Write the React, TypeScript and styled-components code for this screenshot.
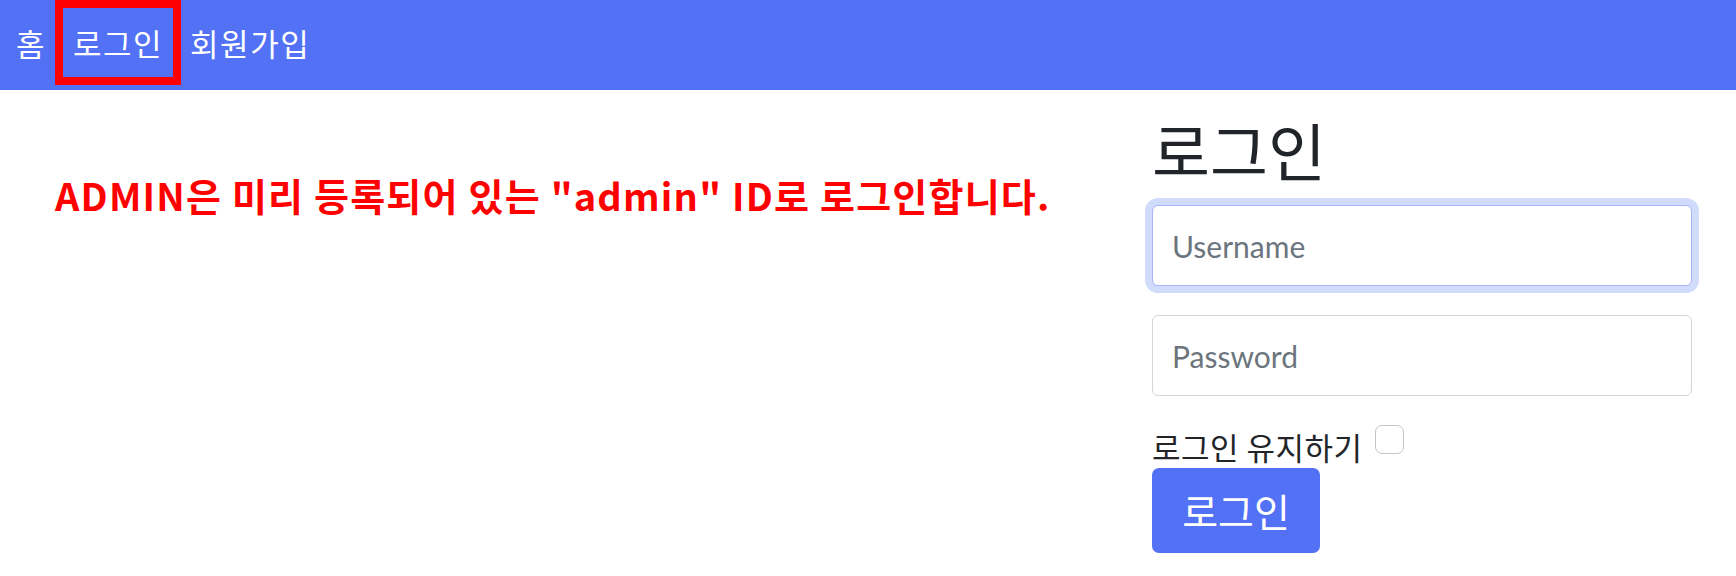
import React from "react";
import styled, { createGlobalStyle } from "styled-components";

const GlobalStyle = createGlobalStyle`
  html, body {
    margin: 0;
    padding: 0;
    background: #ffffff;
  }
  body {
    font-family: "Noto Sans CJK KR", "Noto Sans", sans-serif;
    color: #212529;
  }
  * { box-sizing: border-box; }
`;

const Navbar = styled.nav`
  display: flex;
  align-items: flex-start;
  height: 90px;
  padding-left: 7px;
  background: #5271f5;
`;

const NavLink = styled.a<{ $active?: boolean }>`
  display: flex;
  align-items: center;
  height: 85px;
  padding: 0 ${(p) => (p.$active ? "10px" : "9px")};
  border: ${(p) => (p.$active ? "8px solid #ff0000" : "none")};
  font-size: 31px;
  letter-spacing: 1.5px;
  line-height: 1;
  color: #ffffff;
  text-decoration: none;
  cursor: pointer;
`;

const Main = styled.main`
  display: flex;
  justify-content: space-between;
  padding: 0 44px 0 55px;
`;

const Notice = styled.p`
  margin: 82px 0 0;
  font-size: 38px;
  font-weight: 700;
  letter-spacing: 1.2px;
  line-height: 46px;
  color: #ff0000;
`;

const LoginPanel = styled.section`
  display: flex;
  flex-direction: column;
  width: 540px;
  padding-top: 24px;
`;

const Title = styled.h2`
  margin: 0;
  font-size: 63px;
  font-weight: 400;
  line-height: 70px;
  color: #212529;
`;

const Field = styled.input<{ $focused?: boolean }>`
  display: block;
  width: 100%;
  height: 81px;
  margin-top: ${(p) => (p.$focused ? "21px" : "29px")};
  padding: 0 19px;
  border: 1px solid ${(p) => (p.$focused ? "#a4b6f7" : "#d6d6d6")};
  border-radius: 6px;
  box-shadow: ${(p) => (p.$focused ? "0 0 0 7px #d1dbfb" : "none")};
  font-family: Lato, "Noto Sans", sans-serif;
  font-size: 30px;
  color: #212529;
  outline: none;
  background: #fff;

  &::placeholder {
    color: #6c757d;
  }
`;

const RememberRow = styled.div`
  display: flex;
  align-items: flex-start;
  gap: 12px;
  margin-top: 29px;
`;

const RememberLabel = styled.label`
  font-size: 31px;
  letter-spacing: 0.5px;
  line-height: 43px;
  color: #212529;
`;

const CheckBox = styled.input`
  appearance: none;
  margin: 0;
  width: 29px;
  height: 29px;
  border: 1px solid #c4c4c4;
  border-radius: 7px;
  background: #fff;
`;

const SubmitButton = styled.button`
  width: 168px;
  height: 85px;
  padding: 0;
  border: none;
  border-radius: 7px;
  background: #5271f5;
  color: #ffffff;
  font-family: "Noto Sans CJK KR", sans-serif;
  font-size: 39px;
  line-height: 1;
  cursor: pointer;
`;

export default function App() {
  return (
    <>
      <GlobalStyle />
      <Navbar>
        <NavLink>홈</NavLink>
        <NavLink $active>로그인</NavLink>
        <NavLink>회원가입</NavLink>
      </Navbar>
      <Main>
        <Notice>ADMIN은 미리 등록되어 있는 "admin" ID로 로그인합니다.</Notice>
        <LoginPanel>
          <Title>로그인</Title>
          <Field $focused placeholder="Username" />
          <Field type="password" placeholder="Password" />
          <RememberRow>
            <RememberLabel htmlFor="remember">로그인 유지하기</RememberLabel>
            <CheckBox id="remember" type="checkbox" />
          </RememberRow>
          <SubmitButton>로그인</SubmitButton>
        </LoginPanel>
      </Main>
    </>
  );
}
